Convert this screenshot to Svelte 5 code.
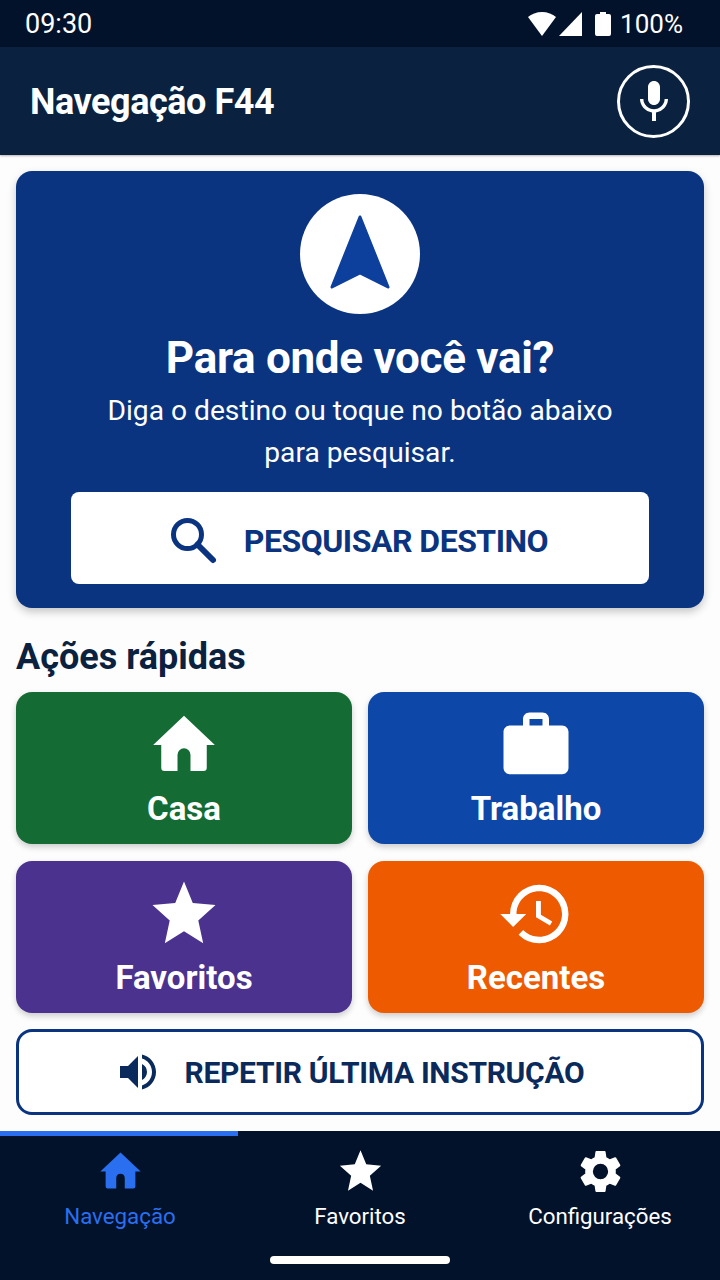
<script lang="ts">
  const home = 'M10 20H6a1 1 0 0 1-1-1v-7H2.500L12 3l9.500 9H19v7a1 1 0 0 1-1 1h-4v-5a2 2 0 0 0-4 0z';
  const star = 'M12 17.27 17.900 21l-1.500-7.030 5.300-4.730-7-.61L12 2 9.300 8.630l-7 .61 5.300 4.730L6.100 21z';
  const gear = 'M19.14 12.94c.04-.3.06-.61.06-.94 0-.32-.02-.64-.07-.94l2.03-1.58a.49.49 0 0 0 .12-.61l-1.92-3.32a.49.49 0 0 0-.59-.22l-2.39.96c-.5-.38-1.03-.7-1.62-.94l-.36-2.54a.48.48 0 0 0-.48-.41h-3.84c-.24 0-.43.17-.47.41l-.36 2.54c-.59.24-1.13.57-1.62.94l-2.39-.96a.48.48 0 0 0-.59.22L2.74 8.87c-.12.21-.08.47.12.61l2.03 1.58c-.05.3-.09.63-.09.94s.02.64.07.94l-2.03 1.58a.49.49 0 0 0-.12.61l1.92 3.32c.12.22.37.29.59.22l2.39-.96c.5.38 1.03.7 1.62.94l.36 2.54c.05.24.24.41.48.41h3.84c.24 0 .44-.17.47-.41l.36-2.54c.59-.24 1.13-.56 1.62-.94l2.39.96c.22.08.47 0 .59-.22l1.92-3.32c.12-.22.07-.47-.12-.61l-2.01-1.58zM12 15.6A3.6 3.6 0 1 1 12 8.4a3.6 3.6 0 0 1 0 7.2z';
  const work = 'M20 6h-4V4c0-1.11-.89-2-2-2h-4c-1.11 0-2 .89-2 2v2H4c-1.11 0-2 .89-2 2v11c0 1.11.89 2 2 2h16c1.11 0 2-.89 2-2V8c0-1.11-.89-2-2-2zm-6 0h-4V4h4v2z';
  const history = 'M13 3a9 9 0 0 0-9 9H1l3.89 3.89.07.14L9 12H6c0-3.87 3.13-7 7-7s7 3.13 7 7-3.13 7-7 7c-1.93 0-3.68-.79-4.94-2.06l-1.42 1.42A8.954 8.954 0 0 0 13 21a9 9 0 0 0 0-18zm-1 5v5l4.28 2.54.72-1.21-3.5-2.08V8H12z';

  const quick = [
    { label: 'Casa', color: '#146c34', icon: home },
    { label: 'Trabalho', color: '#0d47a8', icon: work },
    { label: 'Favoritos', color: '#4a328e', icon: star },
    { label: 'Recentes', color: '#ee5a00', icon: history }
  ];
  const tabs = [
    { label: 'Navegação', icon: home, active: true },
    { label: 'Favoritos', icon: star, active: false },
    { label: 'Configurações', icon: gear, active: false }
  ];
</script>

<div class="screen">
  <div class="status">
    <span class="time">09:30</span>
    <div class="status-right">
      <svg width="28" height="24" viewBox="0 0 28 24"><path d="M14 24 0 5C3.500 2 8.500 0 14 0s10.500 2 14 5z" fill="#fff" /></svg>
      <svg class="signal" width="23" height="24" viewBox="0 0 23 24"><path d="M0 24 23 0v24z" fill="#fff" /></svg>
      <svg class="batt" width="16" height="24" viewBox="0 0 16 24"><path d="M5 0h6v2h3a2 2 0 0 1 2 2v18a2 2 0 0 1-2 2H2a2 2 0 0 1-2-2V4a2 2 0 0 1 2-2h3z" fill="#fff" /></svg>
      <span class="pct">100%</span>
    </div>
  </div>

  <header class="appbar">
    <h1>Navegação F44</h1>
    <button class="mic" aria-label="Falar">
      <svg width="48" height="48" viewBox="0 0 24 24"><path fill="#fff" d="M12 14c1.66 0 3-1.34 3-3V5c0-1.66-1.34-3-3-3S9 3.34 9 5v6c0 1.66 1.34 3 3 3zm5.3-3c0 3-2.54 5.1-5.3 5.1S6.700 14 6.700 11H5c0 3.410 2.720 6.230 6 6.720V22h2v-4.280c3.280-.48 6-3.300 6-6.720h-1.700z" /></svg>
    </button>
  </header>

  <main class="content">
    <section class="hero">
      <div class="logo">
        <svg width="60" height="74" viewBox="0 0 60 74">
          <path d="M30 2 58 72 30 58 2 72z" fill="#0d3f9c" stroke="#0d3f9c" stroke-width="3" stroke-linejoin="round" />
        </svg>
      </div>
      <h2>Para onde você vai?</h2>
      <p>Diga o destino ou toque no botão abaixo<br />para pesquisar.</p>
      <button class="search">
        <svg width="48" height="48" viewBox="0 0 48 48" fill="none" stroke="#0a3480" stroke-width="5">
          <circle cx="17.500" cy="17.500" r="14" />
          <path d="M27.500 27.500 43 43" stroke-linecap="round" stroke-width="6" />
        </svg>
        <span>PESQUISAR DESTINO</span>
      </button>
    </section>

    <h3>Ações rápidas</h3>
    <div class="grid">
      {#each quick as q}
        <button class="tile" style="background: {q.color}">
          <svg width="78" height="78" viewBox="0 0 24 24"><path fill="#fff" d={q.icon} /></svg>
          <span>{q.label}</span>
        </button>
      {/each}
    </div>

    <button class="repeat">
      <svg width="48" height="48" viewBox="0 0 24 24"><path fill="#0a2a5c" d="M3 9v6h4l5 5V4L7 9H3zm13.500 3A4.500 4.500 0 0 0 14 7.970v8.050c1.480-.73 2.500-2.250 2.500-4.020zM14 3.230v2.060c2.890.86 5 3.540 5 6.710s-2.110 5.850-5 6.710v2.060c4.010-.91 7-4.490 7-8.770s-2.990-7.860-7-8.770z" /></svg>
      <span>REPETIR ÚLTIMA INSTRUÇÃO</span>
    </button>
  </main>

  <nav class="tabs">
    <div class="indicator-row"><div class="indicator"></div></div>
    <div class="tab-row">
      {#each tabs as t}
        <div class="tab" class:active={t.active}>
          <svg width="51" height="51" viewBox="0 0 24 24"><path fill="currentColor" d={t.icon} /></svg>
          <span>{t.label}</span>
        </div>
      {/each}
    </div>
    <div class="home-bar"></div>
  </nav>
</div>

<style>
  :global(body) {
    margin: 0;
    background: #fdfdfd;
  }
  .screen {
    width: 720px;
    height: 1280px;
    display: flex;
    flex-direction: column;
    overflow: hidden;
    font-family: Roboto, "Liberation Sans", sans-serif;
    background: #fdfdfd;
  }
  button {
    font-family: inherit;
    border: none;
    padding: 0;
    cursor: pointer;
  }
  .status {
    height: 47px;
    background: #03122b;
    color: #fff;
    display: flex;
    align-items: center;
    justify-content: space-between;
    padding: 0 37px 0 25px;
    font-size: 27px;
    flex: none;
  }
  .status-right {
    display: flex;
    align-items: center;
    font-size: 26px;
  }
  .signal {
    margin-left: 3px;
  }
  .batt {
    margin: 0 9px 0 13px;
  }
  .appbar {
    height: 108px;
    flex: none;
    background: #0a2240;
    color: #fff;
    display: flex;
    align-items: center;
    justify-content: space-between;
    padding: 0 30px;
    box-shadow: 0 1px 2px rgba(0, 0, 0, 0.3);
  }
  h1 {
    margin: 2px 0 0;
    font-size: 36px;
    letter-spacing: -0.45px;
    font-weight: 700;
  }
  .mic {
    width: 73px;
    height: 73px;
    border: 3px solid #fff;
    border-radius: 50%;
    background: transparent;
    display: flex;
    align-items: center;
    justify-content: center;
    box-sizing: border-box;
  }
  .content {
    flex: 1;
    padding: 16px;
    display: flex;
    flex-direction: column;
  }
  .hero {
    height: 437px;
    box-sizing: border-box;
    background: #0a3480;
    border-radius: 16px;
    box-shadow: 0 4px 8px rgba(0, 0, 0, 0.22);
    color: #fff;
    display: flex;
    flex-direction: column;
    align-items: center;
    padding-top: 23px;
  }
  .logo {
    width: 120px;
    height: 120px;
    border-radius: 50%;
    background: #fff;
    display: flex;
    align-items: center;
    justify-content: center;
  }
  .logo svg {
    margin-bottom: 4px;
  }
  h2 {
    margin: 18px 0 0;
    font-size: 44px;
    letter-spacing: -0.3px;
    line-height: 52px;
    font-weight: 700;
  }
  .hero p {
    margin: 6px 0 0;
    font-size: 28.2px;
    line-height: 42px;
    text-align: center;
  }
  .search {
    margin-top: 18px;
    width: 578px;
    height: 92px;
    background: #fff;
    border-radius: 8px;
    color: #0a3480;
    font-size: 32px;
    letter-spacing: -0.5px;
    font-weight: 700;
    display: flex;
    align-items: center;
    justify-content: center;
    gap: 26px;
    padding: 5px 2px 0 0;
  }
  h3 {
    margin: 28px 0 14px;
    font-size: 36px;
    line-height: 42px;
    font-weight: 700;
    color: #0a2240;
  }
  .grid {
    display: grid;
    grid-template-columns: 336px 336px;
    grid-auto-rows: 152px;
    gap: 17px 16px;
  }
  .tile {
    border-radius: 16px;
    color: #fff;
    font-size: 33px;
    font-weight: 700;
    display: flex;
    flex-direction: column;
    align-items: center;
    justify-content: flex-start;
    padding-top: 14px;
    box-shadow: 0 3px 6px rgba(0, 0, 0, 0.2);
  }
  .tile span {
    margin-top: 5px;
    line-height: 40px;
  }
  .repeat {
    margin-top: 16px;
    height: 86px;
    box-sizing: border-box;
    border: 3px solid #0a3480;
    border-radius: 16px;
    background: #fff;
    color: #0a2a5c;
    font-size: 30px;
    letter-spacing: -0.3px;
    font-weight: 700;
    display: flex;
    align-items: center;
    justify-content: center;
    gap: 22.5px;
    padding-right: 21.5px;
  }
  .tabs {
    height: 149px;
    flex: none;
    background: #03122b;
    color: #fff;
    display: flex;
    flex-direction: column;
    position: relative;
  }
  .indicator-row {
    height: 5px;
  }
  .indicator {
    width: 238px;
    height: 100%;
    background: #2a6ff0;
  }
  .tab-row {
    display: grid;
    grid-template-columns: repeat(3, 240px);
    padding-top: 10px;
  }
  .tab {
    display: flex;
    flex-direction: column;
    align-items: center;
    font-size: 22.3px;
    line-height: 30px;
    gap: 4px;
  }
  .tab.active {
    color: #2a6ff0;
  }
  .home-bar {
    position: absolute;
    left: 270px;
    bottom: 16px;
    width: 180px;
    height: 8px;
    border-radius: 4px;
    background: #fff;
  }
</style>
